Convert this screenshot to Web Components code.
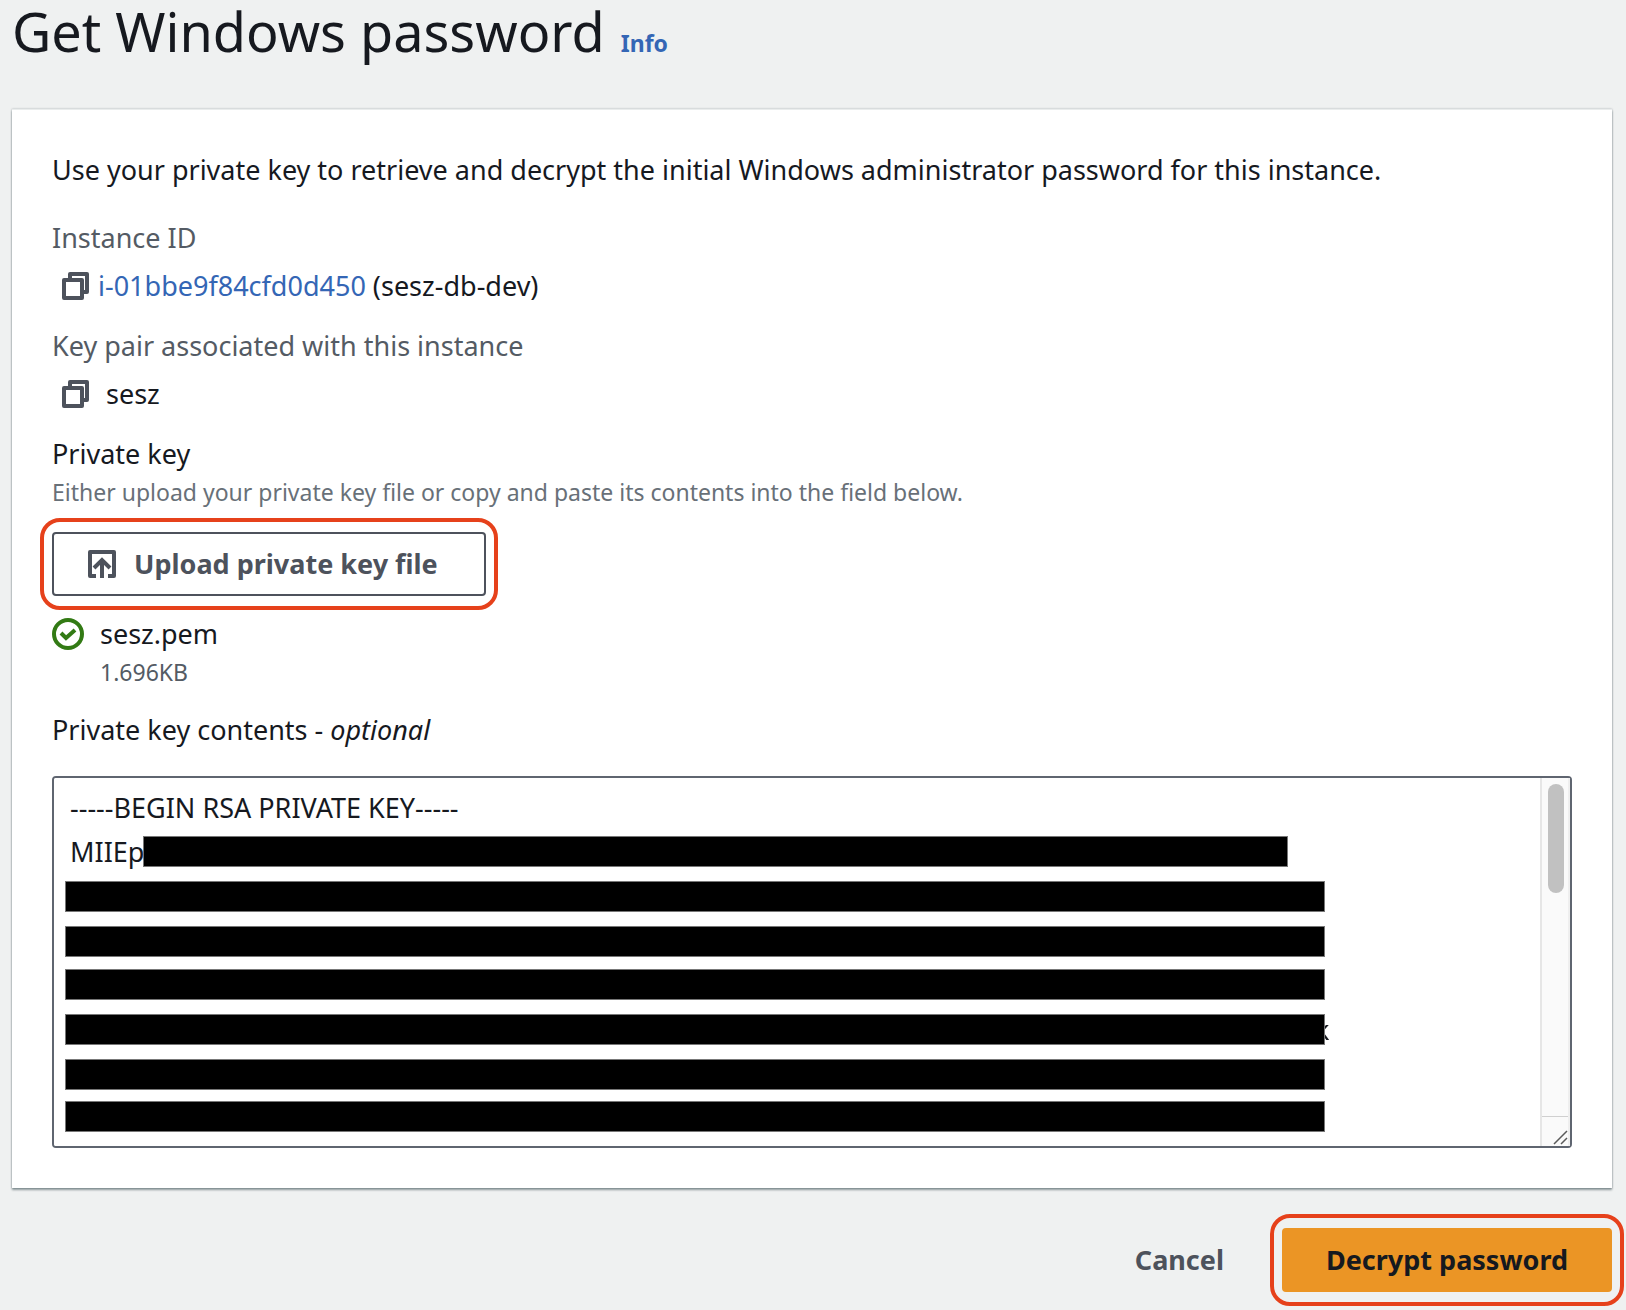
<!DOCTYPE html>
<html lang="en">
<head>
<meta charset="utf-8">
<title>Get Windows password</title>
<style>
  body {
    background: #eff1f1;
    color: #16191f;
    font-family: "Noto Sans", "Open Sans", sans-serif;
    font-size: 27px;
    line-height: 44px;
    margin: 0;
  }

  a {
    color: #3466b5;
    text-decoration: none;
  }
</style>
</head>
<body>
<pw-page>
  <pw-header slot="header" heading="Get Windows password"></pw-header>
  <pw-panel>
    <pw-intro>Use your private key to retrieve and decrypt the initial Windows administrator password for this instance.</pw-intro>
    <pw-value label="Instance ID"><span><a href="#instance">i-01bbe9f84cfd0d450</a> (sesz-db-dev)</span></pw-value>
    <pw-value label="Key pair associated with this instance" spaced>sesz</pw-value>
    <pw-upload></pw-upload>
    <pw-key-contents></pw-key-contents>
  </pw-panel>
  <pw-button slot="actions" variant="link">Cancel</pw-button>
  <pw-button slot="actions" variant="primary" marked>Decrypt password</pw-button>
</pw-page>

<script>
/**
 * Attach an open shadow root with the given styles and markup
 */
function render(host, styles, template) {
  host.attachShadow({ mode: 'open' });
  host.shadowRoot.innerHTML = `<style>${styles}</style>${template}`;
}

class Page extends HTMLElement {
  constructor() {
    super();

    // language=CSS
    const styles = `
      :host {
        display: block;
        padding: 0 14px 0 12px;
      }

      footer {
        align-items: center;
        display: flex;
        gap: 58px;
        justify-content: flex-end;
        padding: 40px 0 18px;
      }
    `
    render(this, styles, `
      <slot name="header"></slot>
      <main><slot></slot></main>
      <footer><slot name="actions"></slot></footer>
    `);
  }
}

class Header extends HTMLElement {
  constructor() {
    super();

    // language=CSS
    const styles = `
      :host {
        display: block;
        height: 109px;
      }

      header {
        align-items: baseline;
        display: flex;
        gap: 16px;
      }

      h1 {
        font-size: 54px;
        font-weight: 400;
        line-height: 62px;
        margin: 0;
      }

      a {
        color: #3466b5;
        font-size: 23px;
        font-weight: 700;
        text-decoration: none;
      }
    `
    render(this, styles, `
      <header>
        <h1>${this.getAttribute('heading')}</h1>
        <a href="#info">Info</a>
      </header>
    `);
  }
}

class Panel extends HTMLElement {
  constructor() {
    super();

    // language=CSS
    const styles = `
      :host {
        background: #fff;
        border-top: 1px solid #eaeded;
        box-shadow: 0 2px 2px 0 rgba(0, 28, 36, 0.4), 0 0 2px 0 rgba(0, 28, 36, 0.3);
        box-sizing: border-box;
        display: block;
        padding: 38px 40px 40px;
      }
    `
    render(this, styles, `<slot></slot>`);
  }
}

class Intro extends HTMLElement {
  constructor() {
    super();

    // language=CSS
    const styles = `
      :host {
        display: block;
        margin-bottom: 24px;
      }
    `
    render(this, styles, `<slot></slot>`);
  }
}

class Value extends HTMLElement {
  constructor() {
    super();

    // language=CSS
    const styles = `
      :host {
        display: block;
        margin-bottom: 16px;
      }

      .label {
        color: #545b64;
        margin-bottom: 4px;
      }

      .value {
        align-items: center;
        display: flex;
        gap: 8px;
        padding-left: 8px;
      }

      :host([spaced]) .value {
        gap: 16px;
      }

      button {
        background: none;
        border: 0;
        color: #4d525c;
        cursor: pointer;
        display: flex;
        padding: 0;
      }
    `
    render(this, styles, `
      <div class="label">${this.getAttribute('label')}</div>
      <div class="value">
        <button type="button" aria-label="Copy">
          <svg width="30" height="30" viewBox="0 0 30 30" fill="none" stroke="currentColor" stroke-width="4" stroke-linejoin="round">
            <path d="M4 9h18v18H4z"/>
            <path d="M10 9V3h17v18h-5"/>
          </svg>
        </button>
        <slot></slot>
      </div>
    `);
  }
}

class Button extends HTMLElement {
  constructor() {
    super();

    // language=CSS
    const styles = `
      :host {
        display: inline-block;
        position: relative;
      }

      button {
        align-items: center;
        background: #fff;
        border: 2px solid #4d525c;
        border-radius: 4px;
        box-sizing: border-box;
        color: #4d525c;
        cursor: pointer;
        display: flex;
        font: inherit;
        font-weight: 700;
        gap: 16px;
        height: 64px;
        padding: 0 42px;
      }

      :host([variant="upload"]) button {
        padding: 0 46px 0 32px;
      }

      :host([variant="link"]) button {
        background: none;
        border: 0;
        padding: 0;
      }

      :host([variant="primary"]) button {
        background: #eb9525;
        border-color: #eb9525;
        color: #16191f;
      }

      /* rounded callout drawn around the button */
      :host([marked])::after {
        border: 4px solid #e6411b;
        border-radius: 20px;
        content: "";
        inset: -14px -12px;
        pointer-events: none;
        position: absolute;
      }
    `
    render(this, styles, `
      <button type="button"><slot name="icon"></slot><slot></slot></button>
    `);
  }
}

class Upload extends HTMLElement {
  constructor() {
    super();

    // language=CSS
    const styles = `
      :host {
        display: block;
      }

      .hint {
        color: #687078;
        font-size: 23px;
        line-height: 32px;
        margin-bottom: 24px;
      }

      .file {
        display: flex;
        gap: 16px;
        margin-top: 16px;
      }

      .file svg {
        margin-top: 6px;
      }

      .size {
        color: #545b64;
        font-size: 23px;
        line-height: 32px;
      }

      pw-button {
        display: block;
        width: max-content;
      }
    `
    render(this, styles, `
      <div>Private key</div>
      <div class="hint">Either upload your private key file or copy and paste its contents into the field below.</div>
      <pw-button variant="upload" marked>
        <svg slot="icon" width="32" height="32" viewBox="0 0 32 32" fill="none" stroke="currentColor" stroke-width="4">
          <path d="M10 28H4V4h24v24h-6" stroke-linejoin="round"/>
          <path d="M16 30V12M8 20l8-8 8 8"/>
        </svg>
        Upload private key file
      </pw-button>
      <div class="file">
        <svg width="32" height="32" viewBox="0 0 32 32" fill="none" stroke="#327a14" stroke-width="4">
          <circle cx="16" cy="16" r="14"/>
          <path d="M9 15l5 5 9-8"/>
        </svg>
        <div>
          <div>sesz.pem</div>
          <div class="size">1.696KB</div>
        </div>
      </div>
    `);
  }
}

class KeyContents extends HTMLElement {
  constructor() {
    super();

    // Elements
    this._textarea;

    // language=CSS
    const styles = `
      :host {
        display: block;
        margin-top: 20px;
      }

      label {
        display: block;
        margin-bottom: 24px;
      }

      .field {
        position: relative;
      }

      textarea {
        background: #fff;
        border: 2px solid #5f6570;
        border-radius: 4px;
        box-sizing: border-box;
        color: inherit;
        display: block;
        font: inherit;
        height: 372px;
        outline: 0;
        overflow-y: scroll;
        padding: 8px 46px 8px 16px;
        resize: none;
        scrollbar-width: none;
        width: 100%;
      }

      .scrollbar {
        background: #fafafa;
        border-left: 2px solid #e6e6e6;
        border-right: 2px solid #efefef;
        bottom: 2px;
        box-sizing: border-box;
        display: flex;
        flex-direction: column;
        justify-content: space-between;
        pointer-events: none;
        position: absolute;
        right: 2px;
        top: 2px;
        width: 30px;
      }

      .thumb {
        background: #c1c1c1;
        border-radius: 8px;
        height: 109px;
        margin: 6px 4px 0 6px;
      }

      .grip {
        border-top: 1px solid #d0d0d0;
        display: block;
      }

      /* redaction bars over the key lines */
      .bar {
        background: #000;
        border: 1px solid #777;
        box-sizing: border-box;
        height: 31px;
        left: 13px;
        pointer-events: none;
        position: absolute;
        width: 1260px;
      }

      .bar.first {
        left: 91px;
        width: 1145px;
      }

      /* last letter of a line that runs out past its bar */
      .tail {
        left: 1263px;
        line-height: 31px;
        pointer-events: none;
        position: absolute;
      }
    `
    const bars = [60, 105, 150, 193, 238, 283, 325]
        .map((top, i) => `<div class="bar${i ? '' : ' first'}" style="top: ${top}px"></div>`)
        .join('');
    render(this, styles, `
      <label for="key">Private key contents - <i>optional</i></label>
      <div class="field">
        <textarea id="key" spellcheck="false"></textarea>
        <span class="tail" style="top: 238px">k</span>
        ${bars}
        <div class="scrollbar">
          <div class="thumb"></div>
          <svg class="grip" width="26" height="29" viewBox="0 0 26 29" fill="none" stroke="#5a5a5a" stroke-width="1.5">
            <path d="M12 27l13-13M19 27l6-6"/>
          </svg>
        </div>
      </div>
    `);
  }

  /**
   * On Component Mount
   */
  connectedCallback() {
    this._textarea = this.shadowRoot.querySelector('#key');
    this._textarea.value = '-----BEGIN RSA PRIVATE KEY-----\nMIIEp' + '\n'.repeat(24);
  }
}

customElements.define('pw-page', Page);
customElements.define('pw-header', Header);
customElements.define('pw-panel', Panel);
customElements.define('pw-intro', Intro);
customElements.define('pw-value', Value);
customElements.define('pw-button', Button);
customElements.define('pw-upload', Upload);
customElements.define('pw-key-contents', KeyContents);
</script>
</body>
</html>
